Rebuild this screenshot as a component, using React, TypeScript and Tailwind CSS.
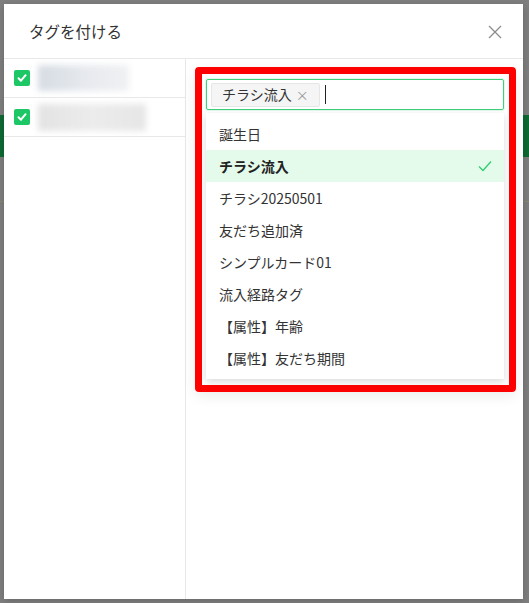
import React from "react";

const items = [
  "誕生日",
  "チラシ流入",
  "チラシ20250501",
  "友だち追加済",
  "シンプルカード01",
  "流入経路タグ",
  "【属性】年齢",
  "【属性】友だち期間",
];

function Check() {
  return (
    <svg width="12" height="12" viewBox="0 0 12 12" fill="none">
      <path d="M2.5 6.2 L5 8.7 L9.6 3.2" stroke="#fff" strokeWidth="2" strokeLinecap="round" strokeLinejoin="round" />
    </svg>
  );
}

export default function App() {
  return (
    <div
      className="relative w-[529px] h-[603px] overflow-hidden bg-[#7f7f7f]"
      style={{ fontFamily: '"Noto Sans CJK JP", "Noto Sans", sans-serif' }}
    >
      <div className="mt-[115px] h-[42px] w-full bg-[#0e6b33]" />
      <div className="mt-[44px] h-px w-full bg-[#8a8a70]" />

      <div className="absolute left-[4px] top-[4px] w-[519px] h-[595px] bg-white flex flex-col shadow-[0_2px_8px_rgba(0,0,0,0.2)]">
        <div className="h-[55px] shrink-0 border-b border-[#e8e8e8] flex items-center justify-between pl-[25px] pr-[21px]">
          <span className="text-[15.5px] text-[#333] pt-[1px]">タグを付ける</span>
          <svg width="14" height="14" viewBox="0 0 14 14" fill="none" className="mt-[1px]">
            <path d="M1 1 L13 13 M13 1 L1 13" stroke="#8c8c8c" strokeWidth="1.3" />
          </svg>
        </div>
        <div className="flex flex-1 min-h-0">
          <div className="w-[182px] shrink-0 border-r border-[#e8e8e8] flex flex-col">
            <div className="h-[39px] border-b border-[#e8e8e8] flex items-center pl-[10px] gap-[8px]">
              <div className="w-[16px] h-[16px] rounded-[2px] bg-[#1ec766] flex items-center justify-center">
                <Check />
              </div>
              <div className="w-[91px] h-[26px] bg-gradient-to-r from-[#d6dce3] via-[#e6e9ee] to-[#f0f1f3] blur-[3px]" />
            </div>
            <div className="h-[39px] border-b border-[#e8e8e8] flex items-center pl-[10px] gap-[8px]">
              <div className="w-[16px] h-[16px] rounded-[2px] bg-[#1ec766] flex items-center justify-center">
                <Check />
              </div>
              <div className="w-[108px] h-[27px] bg-gradient-to-r from-[#e3e3e3] via-[#ececec] to-[#e6e6e6] blur-[3px]" />
            </div>
          </div>
          <div className="flex-1 pl-[9px] pr-[6px] pt-[8px]">
            <div className="w-[321px] h-[325px] border-[7px] border-[#ff0000] rounded-[4px] pl-[4px] pr-[5px] pt-[5px] shadow-[0_4px_14px_rgba(0,0,0,0.08)]">
              <div className="h-[31px] border border-[#3fd07c] rounded-[2px] shadow-[0_0_0_1px_rgba(63,208,124,0.15)] flex items-center pl-[4px]">
                <div className="h-[24px] px-[10px] bg-[#f5f5f5] border border-[#e6e6e6] rounded-[2px] flex items-center gap-[4px]">
                  <span className="text-[14px] text-[#333]">チラシ流入</span>
                  <span className="text-[13px] text-[#999] leading-none">×</span>
                </div>
                <div className="ml-[5px] w-px h-[19px] bg-[#222]" />
              </div>
              <div className="mt-[3px] h-[266px] bg-white shadow-[0_3px_8px_rgba(0,0,0,0.15)] py-[5px]">
                {items.map((t, i) => (
                  <div
                    key={t}
                    className={
                      i === 1
                        ? "h-[32px] pl-[13px] pr-[12px] flex items-center justify-between bg-[#e4fbeb] text-[14px] font-bold text-[#222]"
                        : "h-[32px] pl-[13px] pr-[12px] flex items-center text-[14px] text-[#333]"
                    }
                  >
                    <span>{t}</span>
                    {i === 1 && (
                      <svg width="14" height="12" viewBox="0 0 14 12" fill="none">
                        <path d="M1 6.5 L5 10.5 L13 1.5" stroke="#2ecc71" strokeWidth="1.3" />
                      </svg>
                    )}
                  </div>
                ))}
              </div>
            </div>
          </div>
        </div>
      </div>
    </div>
  );
}
